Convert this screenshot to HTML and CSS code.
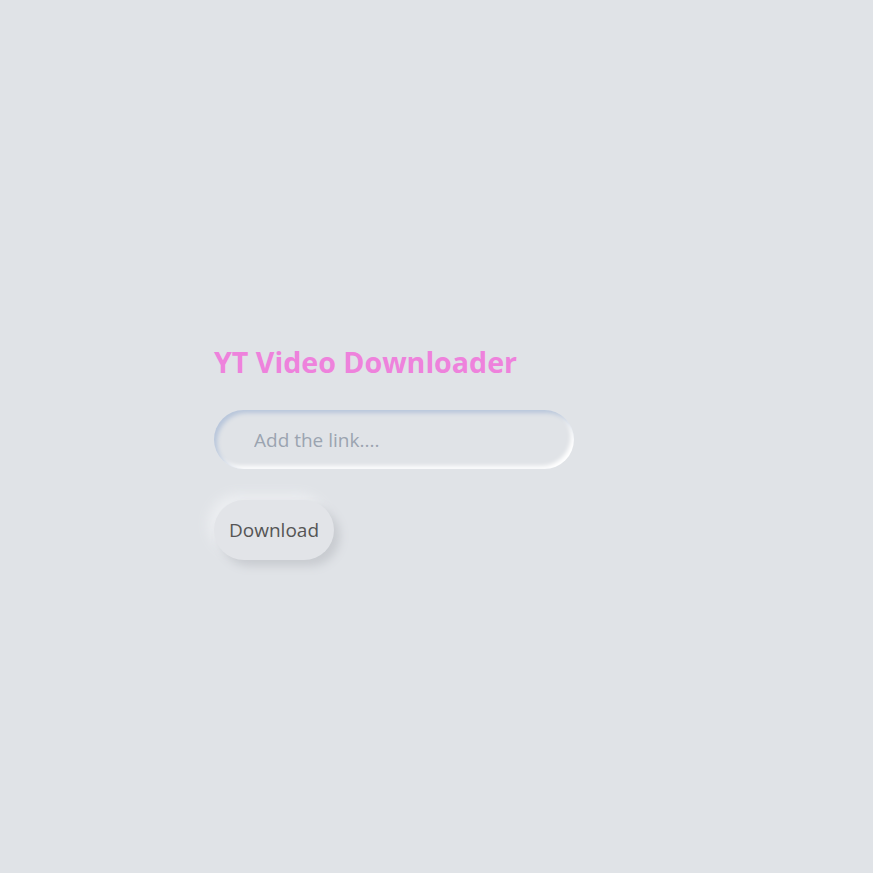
FILE: index.html
```html
<!DOCTYPE html>
<html>
<head>
<meta charset="utf-8">
<link rel="stylesheet" href="styles.css">
</head>
<body>
<main class="app">
  <h1 class="title">YT Video Downloader</h1>
  <input class="link-input" type="text" placeholder="Add the link....">
  <button class="download-btn">Download</button>
</main>
</body>
</html>
```
FILE: styles.css
```css
html, body {
  margin: 0;
  padding: 0;
  background: #e0e3e7;
  height: 100%;
}
body {
  font-family: "Open Sans", "Noto Sans", sans-serif;
}
.app {
  display: flex;
  flex-direction: column;
  align-items: flex-start;
  padding: 340px 0 0 214px;
}
.title {
  margin: 0;
  font-size: 28.6px;
  font-weight: 700;
  color: #ee82dc;
  line-height: 44px;
}
.link-input {
  margin-top: 26px;
  width: 360px;
  height: 59px;
  box-sizing: border-box;
  border: none;
  outline: none;
  border-radius: 30px;
  background: #e0e3e7;
  padding: 0 0 0 40px;
  font-family: inherit;
  font-size: 19px;
  color: #555;
  box-shadow: inset 3px 3px 4px #b8c6db, inset -3px -3px 4px #ffffff;
}
.link-input::placeholder {
  color: #9ba4b0;
}
.download-btn {
  margin-top: 31px;
  width: 120px;
  height: 60px;
  border: none;
  border-radius: 30px;
  background: #e2e4e8;
  font-family: inherit;
  font-size: 19px;
  color: #555;
  box-shadow: 6px 6px 10px #c8cbd0, -6px -6px 12px #eceef1;
}
```
